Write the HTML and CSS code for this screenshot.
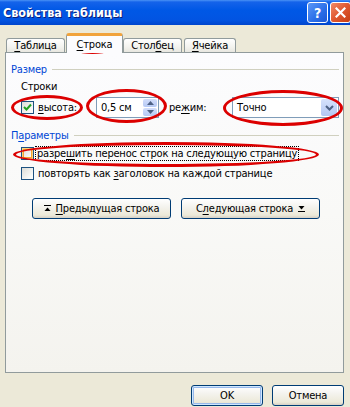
FILE: index.html
```html
<!DOCTYPE html>
<html lang="ru">
<head>
    <meta charset="UTF-8">
    <title>Свойства таблицы</title>
    <link rel="stylesheet" href="styles.css">
</head>
<body>
    <div class="window">
        <div class="titlebar">
            <span class="title">Свойства таблицы</span>
            <div class="title-buttons">
                <span class="tb-btn help">?</span>
                <span class="tb-btn close">
                    <svg width="11" height="11" viewBox="0 0 11 11"><path d="M1.5 1.5 L9.5 9.5 M9.5 1.5 L1.5 9.5" stroke="#fff" stroke-width="2.2" stroke-linecap="square"/></svg>
                </span>
            </div>
        </div>
        <div class="content">
            <div class="tabs">
                <div class="tab t1"><u>Т</u>аблица</div>
                <div class="tab active"><u>С</u>трока</div>
                <div class="tab t3">Стол<u>б</u>ец</div>
                <div class="tab t4"><u>Я</u>чейка</div>
            </div>
            <div class="panel">
                <div class="group-title"><span>Размер</span></div>
                <div class="sub">Строки</div>
                <div class="size-row">
                    <div class="check size-check"><span class="box checked"><svg width="9" height="9" viewBox="0 0 9 9"><path d="M1 4 L3.5 6.5 L8 1.5" fill="none" stroke="#21a121" stroke-width="2"/></svg></span><span><u>в</u>ысота:</span></div>
                    <div class="spin">
                        <span class="spin-value">0,5 см</span>
                        <span class="spin-btns">
                            <span class="spin-btn"><svg width="7" height="4" viewBox="0 0 7 4"><path d="M0 4 L3.5 0 L7 4 Z" fill="#4d6185"/></svg></span>
                            <span class="spin-btn"><svg width="7" height="4" viewBox="0 0 7 4"><path d="M0 0 L3.5 4 L7 0 Z" fill="#4d6185"/></svg></span>
                        </span>
                    </div>
                    <span class="mode-label">ре<u>ж</u>им:</span>
                    <div class="select">
                        <span class="select-value">Точно</span>
                        <span class="select-btn"><svg width="9" height="6" viewBox="0 0 9 6"><path d="M1 1 L4.5 4.5 L8 1" fill="none" stroke="#4d6185" stroke-width="2"/></svg></span>
                    </div>
                </div>
                <div class="group-title params"><span>П<u>а</u>раметры</span></div>
                <div class="check option first">
                    <span class="box hover"></span><span class="focus">разре<u>ш</u>ить перенос строк на следующую страницу</span>
                </div>
                <div class="check option">
                    <span class="box"></span><span>повторять как <u>з</u>аголовок на каждой странице</span>
                </div>
                <div class="nav-buttons">
                    <div class="btn nav">
                        <svg width="7" height="7" viewBox="0 0 7 7"><path d="M0 0.5 H7" stroke="#000" stroke-width="1"/><path d="M0.5 6 L3.5 2.5 L6.5 6 Z" fill="#000"/></svg>
                        <span><u>П</u>редыдущая строка</span>
                    </div>
                    <div class="btn nav">
                        <span>С<u>л</u>едующая строка</span>
                        <svg width="7" height="7" viewBox="0 0 7 7"><path d="M0.5 1 L3.5 4.5 L6.5 1 Z" fill="#000"/><path d="M0 6.5 H7" stroke="#000" stroke-width="1"/></svg>
                    </div>
                </div>
            </div>
            <div class="footer">
                <div class="btn default">OK</div>
                <div class="btn">Отмена</div>
            </div>
        </div>

        <span class="mark m-tab"></span>
        <span class="mark m-height"></span>
        <span class="mark m-spin"></span>
        <span class="mark m-mode"></span>
        <span class="mark m-break"></span>
    </div>
</body>
</html>
```

FILE: styles.css
```css
body {
    margin: 0;
    width: 350px;
    height: 407px;
    overflow: hidden;
    background-color: #ece9d8;
    font-family: 'DejaVu Sans Condensed', 'DejaVu Sans', sans-serif;
    font-stretch: condensed;
    font-size: 11px;
    letter-spacing: -0.2px;
    color: #000;
}
u {
    text-decoration-thickness: 1px;
    text-underline-offset: 2px;
}
.window {
    position: relative;
    width: 350px;
    height: 407px;
}
.titlebar {
    height: 25px;
    display: flex;
    align-items: center;
    justify-content: space-between;
    background: linear-gradient(#4a92f5 0, #1563ea 2px, #0058e6 40%, #0254e2 80%, #0045cc 100%);
}
.title {
    margin-left: 3px;
    color: #fff;
    font-weight: bold;
    font-size: 12.5px;
    letter-spacing: 0;
    text-shadow: 1px 1px 0 #0a1e78;
}
.title-buttons {
    display: flex;
    gap: 2px;
    margin-right: -1px;
}
.tb-btn {
    width: 19px;
    height: 19px;
    border: 1px solid #fff;
    border-radius: 3px;
    display: flex;
    align-items: center;
    justify-content: center;
    color: #fff;
    font-family: 'DejaVu Sans', sans-serif;
    font-weight: bold;
    font-size: 14px;
}
.help {
    background: linear-gradient(135deg, #5a97f7, #2a6ee8 60%, #1d58d5);
}
.close {
    background: linear-gradient(135deg, #f08a6a, #e0582f 50%, #c63e14);
}
.content {
    padding: 0 6px 0 5px;
}
.tabs {
    display: flex;
    align-items: flex-end;
    height: 20px;
    margin-top: 7px;
    padding-left: 1px;
    position: relative;
    z-index: 1;
}
.tab {
    height: 13px;
    width: 57px;
    text-align: center;
    line-height: 13px;
    border: 1px solid #919b9c;
    border-bottom: none;
    border-radius: 3px 3px 0 0;
    background: linear-gradient(#fff, #f3f3ef 60%, #e8e7e0);
}
.tab.active {
    width: 55px;
    height: 17px;
    line-height: 18px;
    margin: 0 0 -1px 1px;
    border-top: 3px solid #f1a33c;
    background: #fcfcfe;
}
.tab.t4 {
    margin-left: 2px;
    width: 50px;
}
.panel {
    height: 310px;
    border: 1px solid #919b9c;
    background: linear-gradient(#fcfcfe, #f9f9f7 50%, #f4f3ee);
    padding: 9px 4px 0 5px;
}
.group-title {
    display: flex;
    align-items: center;
    height: 14px;
    color: #0046d5;
}
.group-title::after {
    content: "";
    flex: 1;
    height: 1px;
    margin-left: 5px;
    background: #d0d0bf;
}
.sub {
    height: 14px;
    line-height: 14px;
    margin: 4px 0 0 10px;
}
.size-row {
    display: flex;
    align-items: center;
    height: 21px;
    margin: 3px 0 0 10px;
}
.check {
    display: flex;
    align-items: center;
    gap: 4px;
}
.size-check {
    width: 75px;
}
.box {
    width: 11px;
    height: 11px;
    border: 1px solid #1c5180;
    background: linear-gradient(135deg, #dcdcd7, #fbfbf9 80%);
    display: flex;
    align-items: center;
    justify-content: center;
    flex: none;
}
.box.hover {
    box-shadow: inset 0 0 0 1px #fcd27a, inset 0 0 0 2px #f5a533;
}
.spin {
    width: 61px;
    height: 19px;
    border: 1px solid #7f9db9;
    background: #fff;
    display: flex;
    align-items: center;
    justify-content: space-between;
}
.spin-value {
    margin-left: 4px;
}
.spin-btns {
    display: flex;
    flex-direction: column;
    gap: 1px;
    margin-right: 1px;
}
.spin-btn {
    width: 14px;
    height: 8px;
    border-radius: 2px;
    background: linear-gradient(#d2defb, #b5c9f5);
    display: flex;
    align-items: center;
    justify-content: center;
}
.mode-label {
    width: 63px;
    margin-left: 10px;
}
.select {
    width: 105px;
    height: 19px;
    border: 1px solid #7f9db9;
    background: #fff;
    display: flex;
    align-items: center;
    justify-content: space-between;
}
.select-value {
    margin-left: 4px;
}
.select-btn {
    width: 16px;
    height: 17px;
    margin-right: 1px;
    border-radius: 2px;
    background: linear-gradient(#d6e2fc, #b3c7f4);
    display: flex;
    align-items: center;
    justify-content: center;
}
.params {
    margin-top: 10px;
}
.option {
    height: 14px;
    margin-left: 10px;
    margin-top: 4px;
}
.option + .option {
    margin-top: 6px;
}
.focus {
    outline: 1px dotted #000;
    outline-offset: 0;
    padding: 0 1px;
    margin-left: -2px;
}
.nav-buttons {
    display: flex;
    gap: 10px;
    margin: 18px 0 0 21px;
}
.btn {
    height: 19px;
    border: 1px solid #003c74;
    border-radius: 3px;
    background: linear-gradient(#fff, #f4f3ee 40%, #ece9d8 85%, #d6d0c5);
    display: flex;
    align-items: center;
    justify-content: center;
    gap: 5px;
}
.btn.nav {
    width: 137px;
}
.footer {
    display: flex;
    justify-content: flex-end;
    gap: 9px;
    margin-top: 12px;
}
.footer .btn {
    width: 70px;
}
.btn.default {
    box-shadow: inset 0 0 0 1px #cee7ff, inset 0 0 0 2px #98b8ea;
}
.mark {
    position: absolute;
    border: 3px solid #dc0000;
    border-radius: 50%;
    box-sizing: border-box;
}
.m-tab {
    left: 66px;
    top: 34px;
    width: 53px;
    height: 20px;
}
.m-height {
    left: 11px;
    top: 95px;
    width: 72px;
    height: 25px;
}
.m-spin {
    left: 86px;
    top: 89px;
    width: 81px;
    height: 34px;
}
.m-mode {
    left: 223px;
    top: 90px;
    width: 120px;
    height: 36px;
}
.m-break {
    left: 13px;
    top: 142px;
    width: 306px;
    height: 25px;
}
```
